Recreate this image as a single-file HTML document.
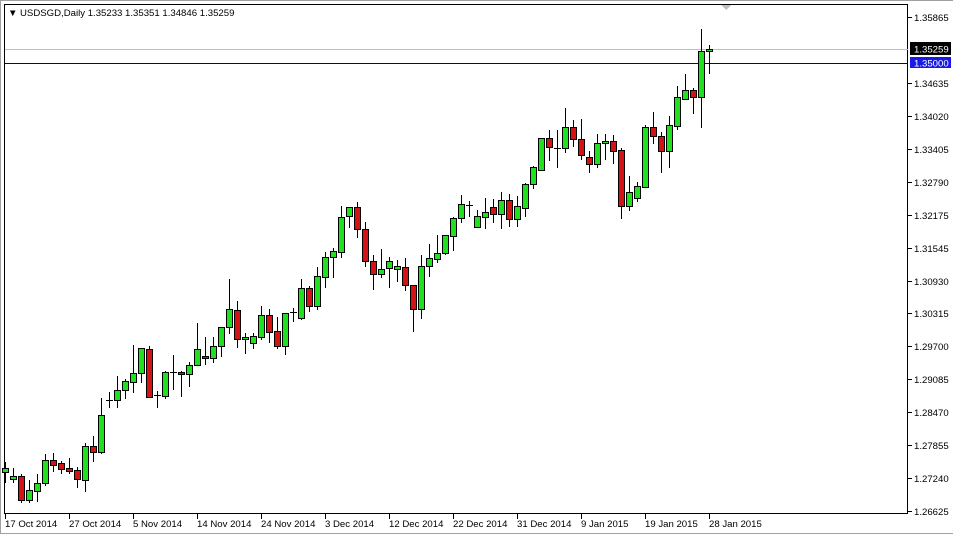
<!DOCTYPE html>
<html><head><meta charset="utf-8"><style>
html,body{margin:0;padding:0;background:#fff;width:953px;height:535px;overflow:hidden}
svg{display:block}
text{font-family:"Liberation Sans",sans-serif;font-size:9.6px;fill:#000}
</style></head><body>
<svg id="s" width="953" height="535" viewBox="0 0 953 535" shape-rendering="crispEdges">
<rect x="0" y="0" width="953" height="535" fill="#fff"/>
<rect x="0.5" y="0.5" width="953" height="533" fill="none" stroke="#a0a0a0"/>
<rect x="4.5" y="4.5" width="903" height="509" fill="none" stroke="#000"/>
<polygon points="721,5 731,5 726,10" fill="#c0c0c0"/>
<line x1="5" y1="49.5" x2="908" y2="49.5" stroke="#c0c0c0"/>
<line x1="5" y1="63.5" x2="908" y2="63.5" stroke="#000090"/>
<g id="c"></g>
<text x="8" y="16" font-size="8">▼</text>
<text x="20" y="16">USDSGD,Daily  1.35233 1.35351 1.34846 1.35259</text>
<g id="ax"></g>
<rect x="910" y="42" width="41" height="13" fill="#000"/>
<text x="914" y="52.5" style="fill:#fff">1.35259</text>
<rect x="910" y="57" width="41" height="11" fill="#1a1ae6"/>
<text x="914" y="66.5" style="fill:#fff">1.35000</text>
<g id="dt"></g>
</svg>
<script>
var d=[
[468,472,462,482,'g'],[476,479,468,482,'g'],[476,500,474,502,'r'],[490,500,480,502,'g'],[483,491,474,501,'g'],
[460,483,454,485,'g'],[460,465,453,471,'r'],[463,469,461,473,'r'],[468,471,458,473,'r'],[470,479,467,487,'r'],
[446,480,443,491,'g'],[446,452,436,461,'r'],[415,452,398,453,'g'],[400,401,392,407,'d'],[390,400,376,407,'g'],
[381,390,379,398,'g'],[373,382,345,392,'g'],[348,373,348,382,'g'],[349,397,346,397,'r'],[395,396,391,407,'d'],
[372,396,371,398,'g'],[372,372,355,389,'d'],[372,374,371,396,'r'],[365,374,362,386,'g'],[349,365,323,365,'g'],
[356,358,337,364,'r'],[346,358,337,362,'g'],[327,346,327,356,'g'],[309,327,279,333,'g'],[310,339,301,347,'r'],
[337,339,333,353,'g'],[336,343,333,348,'g'],[315,337,306,339,'g'],[315,332,309,342,'r'],[331,346,317,348,'r'],
[313,346,313,354,'g'],[312,312,308,321,'d'],[288,318,279,319,'g'],[288,306,286,311,'r'],[276,306,267,309,'g'],
[257,277,252,287,'g'],[251,257,248,277,'g'],[217,252,206,257,'g'],[207,216,207,227,'g'],[207,229,202,237,'r'],
[229,261,222,266,'r'],[261,274,255,289,'r'],[269,274,249,277,'g'],[261,268,257,287,'g'],[266,269,260,281,'g'],
[267,285,258,290,'r'],[285,309,285,331,'r'],[266,309,255,318,'g'],[258,266,244,276,'g'],[253,259,235,262,'g'],
[235,253,235,254,'g'],[218,236,217,250,'g'],[204,218,195,222,'g'],[205,205,201,216,'d'],[216,227,210,227,'g'],
[212,217,198,228,'g'],[207,214,199,222,'r'],[200,214,192,228,'g'],[200,219,194,226,'r'],[206,219,196,226,'g'],
[184,208,183,216,'g'],[167,184,166,188,'g'],[138,170,138,170,'g'],[138,147,130,160,'r'],[148,148,130,167,'d'],
[127,148,108,152,'g'],[127,139,120,146,'r'],[139,155,119,159,'r'],[157,164,151,172,'r'],[143,164,134,167,'g'],
[141,143,134,159,'g'],[141,151,135,163,'r'],[150,206,148,218,'r'],[192,206,176,210,'g'],[186,198,182,201,'g'],
[127,187,125,187,'g'],[127,136,112,143,'r'],[136,151,132,172,'r'],[125,151,116,167,'g'],[97,126,86,129,'g'],
[90,99,74,99,'g'],[90,97,88,113,'r'],[51,97,29,127,'g'],[49,51,45,73,'g']];
var h='';
d.forEach(function(c,i){var x=5+8*i;
h+='<line x1="'+(x+.5)+'" y1="'+c[2]+'" x2="'+(x+.5)+'" y2="'+(c[3]+1)+'" stroke="#000"/>';
if(c[4]=='d'){h+='<line x1="'+(x-3)+'" y1="'+(c[0]+.5)+'" x2="'+(x+4)+'" y2="'+(c[0]+.5)+'" stroke="#000"/>';}
else{var col=c[4]=='g'?'#20e020':'#d41414';var bt=c[0],bb=Math.max(c[1],c[0]+2);
h+='<rect x="'+(x-2.5)+'" y="'+(bt+.5)+'" width="6" height="'+(bb-bt)+'" fill="'+col+'" stroke="#000"/>';}
});
document.getElementById('c').innerHTML=h;
var p=[['1.35865',17],['1.34635',83],['1.34020',116],['1.33405',149],['1.32790',182],['1.32175',215],['1.31545',248],['1.30930',281],['1.30315',313],['1.29700',346],['1.29085',379],['1.28470',412],['1.27855',445],['1.27240',478],['1.26625',511]];
var a='';p.forEach(function(q){a+='<line x1="908" y1="'+(q[1]+.5)+'" x2="912" y2="'+(q[1]+.5)+'" stroke="#000"/><text x="914" y="'+(q[1]+4)+'">'+q[0]+'</text>';});
document.getElementById('ax').innerHTML=a;
var t=[['17 Oct 2014',5],['27 Oct 2014',69],['5 Nov 2014',133],['14 Nov 2014',197],['24 Nov 2014',261],['3 Dec 2014',325],['12 Dec 2014',389],['22 Dec 2014',453],['31 Dec 2014',517],['9 Jan 2015',581],['19 Jan 2015',645],['28 Jan 2015',709]];
var b='';t.forEach(function(q){b+='<line x1="'+(q[1]+.5)+'" y1="514" x2="'+(q[1]+.5)+'" y2="519" stroke="#000"/><text x="'+(q[1])+'" y="527">'+q[0]+'</text>';});
document.getElementById('dt').innerHTML=b;
</script>
</body></html>
